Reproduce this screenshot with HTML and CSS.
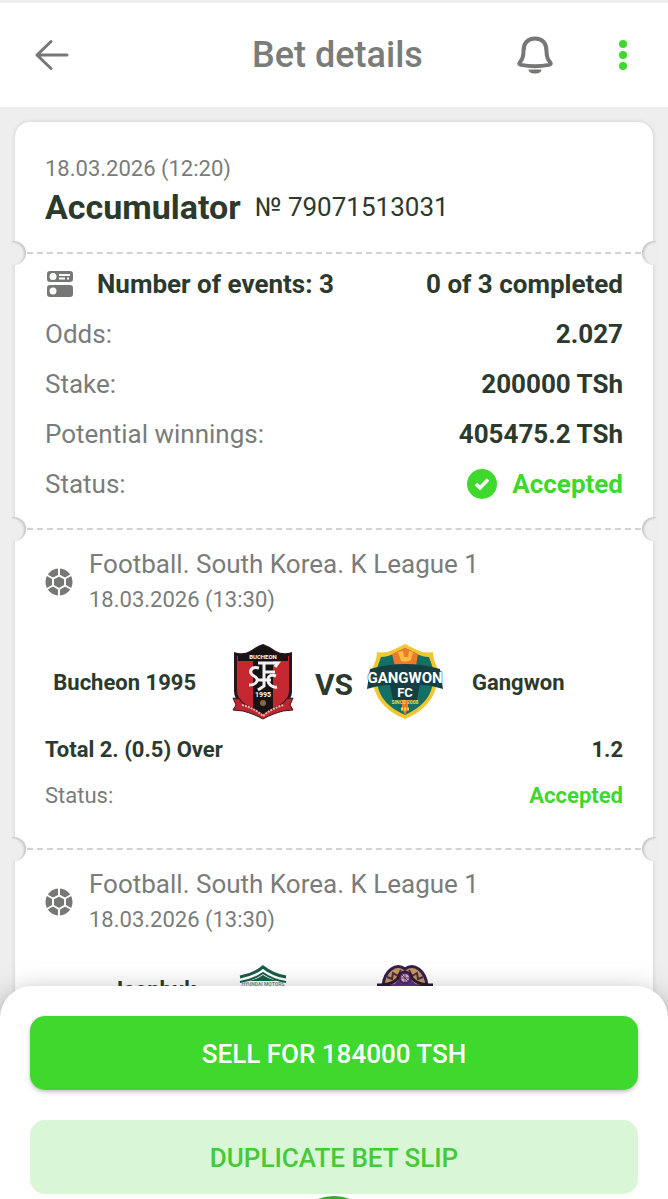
FILE: index.html
```html
<!DOCTYPE html>
<html lang="en">
<head>
  <meta charset="UTF-8" />
  <meta name="viewport" content="width=device-width, initial-scale=1.0" />
  <title>Bet details</title>
  <link rel="stylesheet" href="styles.css">
</head>
<body>
  <!-- Shared icons -->
  <svg class="sprite" aria-hidden="true">
    <symbol id="ball" viewBox="0 0 28 28">
      <circle cx="14" cy="14" r="13.5" fill="#767876" />
      <path d="M14 0v28M1 6.500l26 15M27 6.500l-26 15" fill="none" stroke="#fff" stroke-width="2" />
      <path d="M14 7.500l6 3v7l-6 3.500-6-3.500v-7z" fill="#767876" stroke="#fff" stroke-width="2" />
    </symbol>
  </svg>

  <div class="app">
    <header class="topbar">
      <button class="icon-button" type="button" aria-label="Back">
        <svg width="36" height="36" viewBox="0 0 36 36" fill="none" stroke="#767876" stroke-width="3" stroke-linecap="round" stroke-linejoin="round">
          <path d="M33 18H3M17 4.500L3 18l14 13.500" />
        </svg>
      </button>
      <h1>Bet details</h1>
      <button class="icon-button" type="button" aria-label="Notifications">
        <svg width="36" height="38" viewBox="0 0 36 38">
          <path d="M18 2.500C10.500 2.500 6.500 7.500 6.500 15c0 6.500-1 8.500-3.500 11-1.300 1.400-.8 2.600 1 2.900 9 1.700 19 1.700 28 0 1.800-.3 2.300-1.500 1-2.900-2.500-2.500-3.500-4.500-3.500-11 0-7.500-4-12.500-11.500-12.500z" fill="none" stroke="#767876" stroke-width="4" />
          <path d="M11.500 33.500h13c0 2.500-2.500 4-6.500 4s-6.500-1.500-6.500-4z" fill="#767876" />
        </svg>
      </button>
      <button class="icon-button" type="button" aria-label="More options">
        <svg width="10" height="32" viewBox="0 0 10 32" fill="#3fd82c">
          <circle cx="5" cy="5" r="4" />
          <circle cx="5" cy="16" r="4" />
          <circle cx="5" cy="27" r="4" />
        </svg>
      </button>
    </header>

    <main>
      <article class="slip">
        <section class="slip-head">
          <p class="date">18.03.2026 (12:20)</p>
          <div class="slip-title">
            <h2>Accumulator</h2>
            <span>№ 79071513031</span>
          </div>
        </section>

        <section class="summary perforated">
          <div class="row strong">
            <svg width="28" height="26" viewBox="0 0 28 26">
              <rect x="2" y="0" width="26" height="11" rx="3" fill="#767876" />
              <rect x="2" y="14" width="26" height="12" rx="3" fill="#767876" />
              <circle cx="8" cy="5.500" r="3.500" fill="#fff" />
              <circle cx="8" cy="20" r="3.500" fill="#fff" />
              <path d="M14 4h11M14 7.500h6M22 7.500h2" stroke="#fff" stroke-width="2" />
            </svg>
            <span class="events">Number of events: 3</span>
            <span class="value">0 of 3 completed</span>
          </div>
          <div class="row"><span>Odds:</span><span class="value">2.027</span></div>
          <div class="row"><span>Stake:</span><span class="value">200000 TSh</span></div>
          <div class="row"><span>Potential winnings:</span><span class="value">405475.2 TSh</span></div>
          <div class="row">
            <span>Status:</span>
            <span class="value accepted">
              <svg width="30" height="30" viewBox="0 0 30 30">
                <circle cx="15" cy="15" r="15" fill="#3fd82c" />
                <path d="M9 15l4 4 8-8.500" fill="none" stroke="#fff" stroke-width="3.500" />
              </svg>
              Accepted
            </span>
          </div>
        </section>

        <section class="event perforated">
          <div class="event-head">
            <svg width="28" height="28"><use href="#ball" /></svg>
            <div>
              <h3>Football. South Korea. K League 1</h3>
              <p class="date">18.03.2026 (13:30)</p>
            </div>
          </div>
          <div class="teams">
            <span class="team home">Bucheon 1995</span>
            <svg class="logo" viewBox="0 0 76 76" role="img" aria-label="Bucheon crest">
              <path d="M9 8q9 3 16-1 7-5 13-7 6 2 13 7 7 4 16 1v39c0 13-14 18-29 27C23 65 9 60 9 47z" fill="#251719" />
              <path d="M12 12q8 1 14-2l12-7 12 7q6 3 14 2v35c0 11-13 16-26 24C25 63 12 58 12 47z" fill="#c52730" />
              <path d="M28 17h20v48l-10 6-10-6zM13 10q7 2 13-2l12-7 12 7q6 4 13 2v7H13z" fill="#171315" />
              <text class="crest-text" x="38" y="15" font-size="6" fill="#fff">BUCHEON</text>
              <g fill="none" stroke="#f2f2f2" stroke-width="3">
                <path d="M33 19h20l-3 4M39 19v23l-6 4M39 28h11M33 36h13" />
                <path d="M34 24c-9-2-11 5-5 8 6 3 3 9-5 9M51 32c-5-2-8 0-8 4s4 8 9 7" />
              </g>
              <text class="crest-text" x="38" y="53" font-size="7" fill="#fff">1995</text>
              <circle cx="38" cy="59" r="3" fill="#8a6540" />
              <path d="M8 54l7 1c1 6 13 8 23 15 10-7 22-9 23-15l7-1-3 7 3 5-10 1c-7 2-13 4-20 8-7-4-13-6-20-8L8 66l3-5z" fill="#bd2630" stroke="#331a1d" />
              <path d="M17 61q12 3 21 11 9-8 21-11" fill="none" stroke="#e6b1ab" stroke-width="2" stroke-dasharray="2 1" />
            </svg>
            <span class="versus">VS</span>
            <svg class="logo" viewBox="0 0 76 76" role="img" aria-label="Gangwon FC crest">
              <path d="M38 0l10 5q9 5 18 3c0 6 2 11 5 17 1 20-6 39-33 50C11 64 4 45 5 25c3-6 5-11 5-17q9 2 18-3z" fill="#f2c62f" />
              <path d="M38 4l10 5q7 4 14 4l5 14c0 21-7 34-29 44C16 61 9 48 9 27l5-14q7 0 14-4z" fill="#147064" />
              <path d="M25 10l6-3 7-3 7 3 6 3-2 12H28zM35 20h6v45l-3 6-3-6z" fill="#ef792c" />
              <path d="M31 8l3 9q5 2 10-1l2-8-4-1-1 6h-4l-1-6z" fill="#f8bc45" />
              <path d="M3 25q35-10 70 0l3 20q-13-4-23-4l-3 15H26l-3-15q-10 0-23 4z" fill="#163f43" />
              <text class="crest-text gangwon" x="38" y="39" font-size="15" fill="#fff">GANGWON</text>
              <text class="crest-text" x="38" y="53" font-size="13" fill="#fff">FC</text>
              <text class="crest-text" x="38" y="60" font-size="5" fill="#f5d547">SINCE 2008</text>
              <path d="M34 65h8" stroke="#f5d547" stroke-width="3" stroke-dasharray="2 1" />
            </svg>
            <span class="team">Gangwon</span>
          </div>
          <div class="row small strong"><span>Total 2. (0.5) Over</span><span class="value">1.2</span></div>
          <div class="row small"><span>Status:</span><span class="value accepted">Accepted</span></div>
        </section>

        <section class="event perforated">
          <div class="event-head">
            <svg width="28" height="28"><use href="#ball" /></svg>
            <div>
              <h3>Football. South Korea. K League 1</h3>
              <p class="date">18.03.2026 (13:30)</p>
            </div>
          </div>
          <div class="teams">
            <span class="team home">Jeonbuk Hyundai</span>
            <svg class="logo" viewBox="0 0 76 76" role="img" aria-label="Jeonbuk crest">
              <path d="M15 13q13-2 23-10 10 8 23 10" fill="none" stroke="#185c49" stroke-width="3" />
              <path d="M15 18q13-2 23-9 10 7 23 9" fill="none" stroke="#185c49" stroke-width="2" />
              <path d="M22 17q9-1 16-6 7 5 16 6z" fill="#185c49" />
              <text class="crest-text" x="38" y="22" font-size="5" fill="#6f8f88">HYUNDAI MOTORS</text>
              <path d="M17 26h42v20q-4 14-21 24-17-10-21-24z" fill="#185c49" />
            </svg>
            <span class="versus">VS</span>
            <svg class="logo" viewBox="0 0 76 76" role="img" aria-label="Anyang crest">
              <path d="M16 22C17 7 29-2 38 5c9-7 21 2 22 17z" fill="#c69561" stroke="#33204a" stroke-width="3" />
              <path d="M20 13l5 2 1-6 5 3 3-6M56 13l-5 2-1-6-5 3-3-6" fill="none" stroke="#4b304b" stroke-width="2" />
              <path d="M24 22q7-3 8-9 6-8 12 0 1 6 8 9l7 24q-4 14-21 23-17-9-21-23z" fill="#56308c" />
              <path d="M10 21q18 0 22-9 6-8 12 0 4 9 22 9" fill="none" stroke="#291a32" stroke-width="3" />
              <circle cx="38" cy="14" r="5" fill="#d5b2bb" stroke="#4a245e" stroke-width="2" />
              <path d="M38 9v10M33 14h10M35 11l6 6" stroke="#6b3b78" />
            </svg>
            <span class="team">Anyang</span>
          </div>
        </section>
      </article>
    </main>

    <footer class="actions">
      <button class="action sell" type="button">SELL FOR 184000 TSH</button>
      <button class="action duplicate" type="button">DUPLICATE BET SLIP</button>
      <span class="nav-bubble"></span>
    </footer>
  </div>
</body>
</html>
```
FILE: styles.css
```css
:root {
  --page: #eeeeee;
  --green: #3fd82c;
  --gray: #7a7c7a;
  --dark: #2b3a2d;
  --line: #d2d2d2;
}
* {
  box-sizing: border-box;
}
body {
  margin: 0;
  font-family: Roboto, sans-serif;
  font-size: 26px;
  color: var(--gray);
  background: var(--page);
}
h1, h2, h3, p {
  margin: 0;
}
button {
  font-family: inherit;
  border: none;
  cursor: pointer;
}
svg {
  display: block;
  flex-shrink: 0;
}
.sprite {
  position: absolute;
  width: 0;
  height: 0;
}
.app {
  display: flex;
  flex-direction: column;
  height: 100vh;
  overflow: hidden;
}

/* Top bar */
.topbar {
  display: grid;
  grid-template-columns: 88px 1fr 88px 88px;
  align-items: center;
  flex-shrink: 0;
  height: 107px;
  padding: 0 1px 0 8px;
  border-top: 3px solid var(--page);
  background: #fff;
}
.topbar h1 {
  padding-left: 88px;
  font-size: 36px;
  font-weight: 500;
  text-align: center;
}
.icon-button {
  display: flex;
  align-items: center;
  justify-content: center;
  height: 88px;
  padding: 0;
  background: none;
}

/* Bet slip */
main {
  flex: 1;
  min-height: 0;
  margin-bottom: -32px;
  padding: 15px 15px 0;
  overflow: hidden;
}
.slip {
  border-radius: 15px;
  background: #fff;
  box-shadow: 0 0 4px rgba(0, 0, 0, 0.15);
}
.slip-head {
  padding: 35px 30px 20px;
}
.date {
  font-size: 22px;
  line-height: 24px;
}
.slip-title {
  display: flex;
  align-items: center;
  gap: 14px;
  line-height: 52px;
  color: var(--dark);
}
.slip-title h2 {
  font-size: 34px;
  font-weight: 700;
}
.perforated {
  position: relative;
}
/* dashed tear line */
.perforated > :first-child::before {
  content: "";
  position: absolute;
  top: -1px;
  left: 12px;
  right: 12px;
  border-top: 2px dashed var(--line);
}
/* round notches at both ends of the tear line */
.perforated::before,
.perforated::after {
  content: "";
  position: absolute;
  top: -12px;
  width: 14px;
  height: 24px;
  background: var(--page);
}
.perforated::before {
  left: -3px;
  border-radius: 0 12px 12px 0;
  box-shadow: inset -2px 1px 2px #c8c8c8;
}
.perforated::after {
  right: -3px;
  border-radius: 12px 0 0 12px;
  box-shadow: inset 2px 1px 2px #c8c8c8;
}
.summary {
  padding: 6px 30px 20px;
}
.row {
  display: flex;
  align-items: center;
  min-height: 50px;
}
.value {
  margin-left: auto;
  font-weight: 700;
  color: var(--dark);
}
.strong {
  font-weight: 700;
  color: var(--dark);
}
.events {
  margin-left: 24px;
}
.accepted {
  display: flex;
  align-items: center;
  gap: 15px;
  color: var(--green);
}
.row.small {
  min-height: 46px;
  font-size: 22px;
}

/* Events */
.event {
  padding: 17px 30px 31px;
}
.event-head {
  display: flex;
  align-items: center;
  gap: 16px;
}
.event-head h3 {
  font-size: 26px;
  font-weight: 400;
  line-height: 36px;
}
.event-head .date {
  line-height: 36px;
}
.teams {
  display: grid;
  grid-template-columns: 1fr 76px 66px 76px 1fr;
  align-items: center;
  margin: 26px 0 6px;
}
.logo {
  width: 76px;
  height: 76px;
}
.team {
  padding: 2px 0 0 29px;
  font-size: 22px;
  font-weight: 700;
  line-height: 26px;
  color: var(--dark);
}
.team.home {
  padding: 2px 29px 0 0;
  text-align: right;
}
.versus {
  padding-top: 4px;
  font-size: 30px;
  font-weight: 700;
  text-align: center;
  color: var(--dark);
}
.crest-text {
  font-family: Roboto, sans-serif;
  font-weight: 700;
  text-anchor: middle;
}
.gangwon {
  stroke: #163f43;
  paint-order: stroke;
}

/* Bottom sheet */
.actions {
  position: relative;
  display: flex;
  flex-direction: column;
  gap: 30px;
  flex-shrink: 0;
  padding: 30px 30px 5px;
  border-radius: 32px 32px 0 0;
  background: #fff;
  box-shadow: 0 12px 30px rgba(0, 0, 0, 0.5);
}
.action {
  height: 74px;
  padding-top: 3px;
  border-radius: 15px;
  font-size: 26px;
  font-weight: 500;
}
.sell {
  color: #fff;
  background: var(--green);
  box-shadow: 0 2px 4px rgba(0, 0, 0, 0.25);
}
.duplicate {
  color: #45c936;
  background: #d9f7d6;
}
/* top of the round button in the navigation bar */
.nav-bubble {
  position: absolute;
  top: 210px;
  left: 50%;
  width: 88px;
  height: 88px;
  margin-left: -44px;
  border-radius: 50%;
  background: #35ad2b;
}
```
